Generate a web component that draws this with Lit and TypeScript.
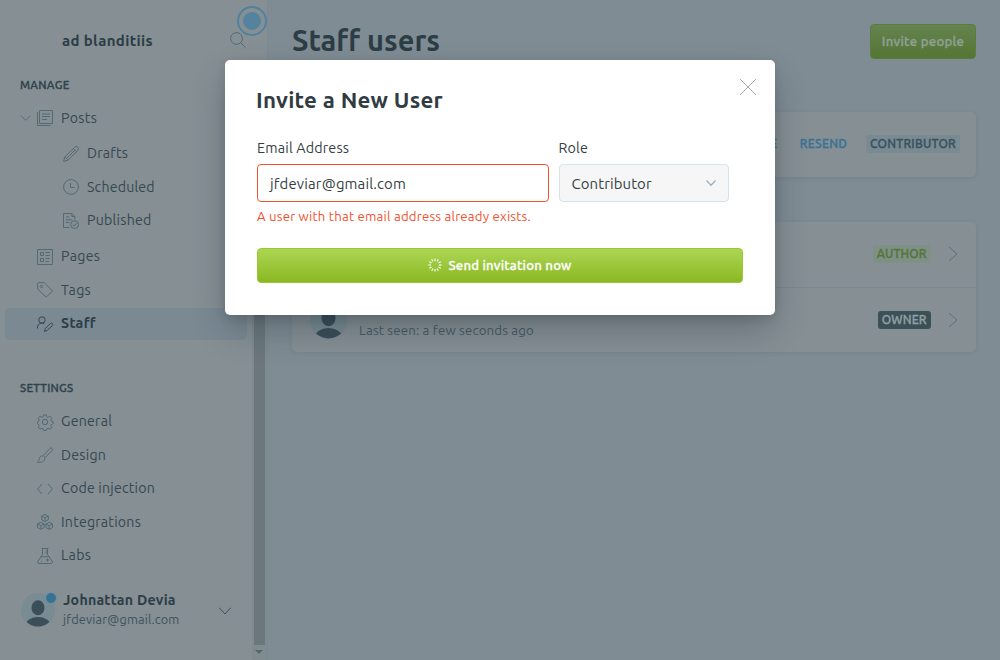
import { LitElement, html, css, svg } from "lit";
import { customElement, property } from "lit/decorators.js";

const icons: Record<string, unknown> = {
  posts: svg`<path d="M2.5.5h13v13h-13zM.5 2v13.500h13M5 4h8M5 6.500h8M5 9.500h5"/>`,
  drafts: svg`<path d="M.6 15.400l1.300-4.500L11.600 1.200a2.200 2.200 0 0 1 3.200 3.200L5.100 14.100zM1.900 10.900l3.200 3.200M10.300 2.500l3.200 3.200M3.500 12.500l8.400-8.400"/>`,
  scheduled: svg`<circle cx="8" cy="8" r="7.400"/><path d="M7.500 4v4.500h4"/>`,
  published: svg`<path d="M6.500 14.500h-6V.5h8.300l3 3v3M8.800.5v3h3M2.800 4h3.400M2.800 6.800h6M2.800 9.500h3.700"/><circle cx="11.600" cy="11.600" r="3.900"/><path d="M9.800 11.700l1.400 1.400 2.300-2.800"/>`,
  pages: svg`<path d="M.5.5h15v15H.5zM3.500 3.500h3v3h-3zM3.500 9.500h3v3h-3zM8.500 3.500h4.500M8.500 6.500h4.500M8.500 9.500h4.500M8.500 12.500h3.500"/>`,
  tags: svg`<path d="M.6 1.600a1 1 0 0 1 1-1h5.600l8.300 8.300-6.300 6.300L.6 7z"/><circle cx="4.400" cy="4.400" r="1.200"/>`,
  staff: svg`<circle cx="5" cy="4" r="3.200"/><path d="M.5 12.500V11a4.300 4.300 0 0 1 6.800-3.200M7.500 15.500l.8-3 5-5a1.400 1.400 0 0 1 2 2l-5 5z"/>`,
  general: svg`<circle cx="8" cy="8" r="2.700"/><path d="M6.700.8h2.600l.6 2 1.200.5 1.800-1 1.900 1.900-1 1.800.5 1.200 2 .6v1.900l-2 .8-.5 1.200 1 1.800-1.900 1.800-1.800-1-1.200.5-.6 1.700H6.700l-.6-1.700-1.200-.5-1.800 1-1.900-1.800 1-1.800-.5-1.200-1.300-.8V7.800l1.300-.6.5-1.200-1-1.800 1.900-1.900 1.800 1 1.200-.5z"/>`,
  design: svg`<path d="M6.300 8.700L13 1.400a1.500 1.500 0 0 1 2.200 2.100L8.100 10.500M6.200 8.500l2.100 2.100M6.200 9.200c-2-.7-3.500.3-3.800 2.200-.2 1.600-.7 2.800-1.900 3.700 2.800.7 7.600.3 7.200-4.200"/>`,
  code: svg`<path d="M5 3L.6 8 5 13M11 3l4.400 5-4.400 5"/>`,
  integrations: svg`<path d="M8 .5l3.300 1.600v3.700L8 7.500 4.700 5.800V2.100zM4.700 2.100L8 3.900l3.300-1.800M8 3.900v3.600M3.800 8.300l3.300 1.600v3.700l-3.300 1.700-3.300-1.700V9.900zM.5 9.900l3.300 1.800 3.300-1.800M3.800 11.700v3.600M12.200 8.300l3.300 1.600v3.700l-3.300 1.700-3.300-1.700V9.900zM8.900 9.900l3.300 1.800 3.300-1.800M12.200 11.700v3.600"/>`,
  labs: svg`<path d="M4.500.5h7M5.500.5v6L.7 13.600a1.300 1.300 0 0 0 1.100 1.900h12.400a1.300 1.300 0 0 0 1.100-1.900L10.500 6.500v-6M3.700 8.700h8.600M8.500 3h2M8.500 5h2M10.500 10.500v3M9 12h3M5 11.500v.8M4 13.500h.8"/>`,
  search: svg`<circle cx="6.500" cy="6.500" r="5.900"/><path d="M10.800 10.800l4.800 4.800"/>`,
};
const icon = (n: string) => html`<svg class="icon" viewBox="0 0 16 16">${icons[n]}</svg>`;

/* A line of text tracked so that it fills a given measure. */
@customElement("tracked-text")
class TrackedText extends LitElement {
  @property({ type: Number }) measure = 0;
  static styles = css`
    :host { display: inline-block; white-space: nowrap; }
    .t { display: inline-block; }
  `;
  render() { return html`<span class="t"><slot></slot></span>`; }
  firstUpdated() {
    const n = (this.textContent ?? "").trim().length;
    const el = this.renderRoot.querySelector(".t") as HTMLElement;
    const w = el.getBoundingClientRect().width;
    if (n > 1 && w > 0) el.style.letterSpacing = `${(this.measure - w) / n}px`;
  }
}
const t = (s: string, w: number) => html`<tracked-text measure=${w}>${s}</tracked-text>`;

const manage: [string, string, number, string][] = [
  ["posts", "Posts", 36.2, "first"],
  ["drafts", "Drafts", 41.2, "sub"],
  ["scheduled", "Scheduled", 67.8, "sub"],
  ["published", "Published", 64.6, "sub last"],
  ["pages", "Pages", 39.2, ""],
  ["tags", "Tags", 30, ""],
  ["staff", "Staff", 35, "active"],
];
const settings: [string, string, number, string][] = [
  ["general", "General", 51.2, ""],
  ["design", "Design", 45.2, ""],
  ["code", "Code injection", 94, ""],
  ["integrations", "Integrations", 80, ""],
  ["labs", "Labs", 30.2, ""],
];

@customElement("app-root")
export class AppRoot extends LitElement {
  static styles = css`
    :host { display: block; position: relative; width: 1000px; height: 660px; overflow: hidden;
      font-family: Ubuntu, "Noto Sans", sans-serif; font-size: 14.2px; line-height: 20px; color: #36474f; }
    * { box-sizing: border-box; }
    .page { display: flex; height: 660px; background: #7f8c94; }
    .side { width: 268px; display: flex; flex-direction: column; background: #858f94; border-right: 1px solid #7b8990; }
    .head { height: 62px; flex: none; display: flex; align-items: center; justify-content: space-between; padding: 19px 21px 0 62px; font-size: 15px; font-weight: 700; color: #2c3d45; }
    .head .icon { margin-top: -2px; }
    .scroller { flex: 1; display: flex; min-height: 0; }
    .nav { width: 252px; display: flex; flex-direction: column; }
    .bar { flex: 1; background: #808b90; display: flex; flex-direction: column; align-items: center; padding: 100px 1px 6px 0; }
    .thumb { flex: 1; width: 11px; background: #6b777d; }
    .down { margin-top: 5px; border: 4px solid transparent; border-top: 4px solid #56646b; border-bottom: 0; }
    .label { font-size: 11.4px; font-weight: 500; color: #2f424b; padding-left: 20px; height: 20px; line-height: 20px; }
    .label, .invite, .one, .tag, .send { -webkit-text-stroke: .3px currentColor; }
    .label.m { margin: 13px 0 6px; }
    .label.s { margin: 38px 0 6.3px; }
    .icon { width: 16px; height: 16px; fill: none; stroke: #536a75; stroke-width: 1; overflow: visible; flex: none; display: block; }
    .item { height: 33.5px; display: flex; align-items: center; gap: 8px; padding-left: 37px; color: #374850; }
    .item .icon { margin-top: 1px; }
    .item.first { margin-bottom: 2px; padding-left: 20px; gap: 6px; }
    .item.first .icon + * { margin-left: 2px; }
    .item.first .chev { width: 11px; height: 6px; }
    .item.sub { padding-left: 63px; }
    .item.last { margin-bottom: 2.3px; }
    .item.active { margin: 1.7px 5px 0; height: 32px; padding: 0 0 1px 32px; border-radius: 5px; background: #7a8992; font-weight: 700; color: #2d3e47; }
    .item.active .icon { stroke: #344851; }
    .chev { fill: none; stroke: #5b717b; stroke-width: 1; flex: none; display: block; overflow: visible; }
    .user { margin-top: 19.2px; display: flex; align-items: center; padding: 0 21px 0 21px; height: 38px; }
    .user > .chev { margin-top: 2px; stroke: #3d525d; }
    .who { flex: 1; margin-left: 8px; font-size: 14.2px; line-height: 19px; font-weight: 700; color: #2c3d46; display: flex; flex-direction: column; }
    .mail { font-size: 12.7px; font-weight: 400; color: #3d525d; }
    .av { position: relative; width: 34px; height: 34px; flex: none; }
    .av svg { display: block; }
    .dot { position: absolute; left: 24px; top: -1px; width: 12px; height: 12px; border-radius: 50%; background: #357294; border: 1px solid #7d9099; }
    .beacon { position: absolute; left: 237px; top: 6px; width: 30px; height: 30px; border-radius: 50%; border: 2px solid #4f829f; display: grid; place-items: center; }
    .core { width: 18px; height: 18px; border-radius: 50%; background: #5483a0; }
    .main { flex: 1; padding: 24px 24px 0; }
    .title { display: flex; justify-content: space-between; align-items: flex-start; height: 88px; font-size: 29px; line-height: 32px; font-weight: 700; color: #2c3d45; }
    .invite { width: 106px; height: 35px; border-radius: 4px; background: linear-gradient(#64834f, #547634); border: 1px solid #5b7c3b; font-size: 13.2px; line-height: 33px; font-weight: 500; color: #91a097; text-align: center; }
    .card { background: #858f94; border-radius: 5px; box-shadow: 0 1px 4px rgba(40, 60, 70, .1); }
    .one { height: 65px; margin-bottom: 45px; display: flex; justify-content: flex-end; align-items: center; padding: 0 16px 2px 0; font-size: 12.1px; font-weight: 500; }
    .link { color: #387294; margin-right: 18.7px; }
    .link.first { margin-right: 22.5px; }
    .tag { height: 18px; line-height: 18px; border-radius: 3px; font-size: 12.1px; font-weight: 500; padding: 0 4px; background: #798a92; color: #38515f; }
    .tag.author { background: #7f9086; color: #557538; }
    .tag.owner { background: #3c5058; color: #91a0a5; }
    .row { height: 65px; display: flex; align-items: center; padding: 0 18px; border-top: 1px solid #7b888f; }
    .row.top { border-top: 0; padding-bottom: 1px; }
    .row .tag { margin-right: 17.3px; }
    .row .av { width: 37px; height: 37px; }
    .grow { flex: 1; }
    .seen { margin: 20px 0 0 12px; flex: 1; font-size: 13.2px; color: #455a65; }
    .modal { position: absolute; left: 225px; top: 60px; width: 550px; height: 255px; border-radius: 5px; background: #fff; padding: 26px 32px 32px; box-shadow: 0 16px 36px -4px rgba(15, 25, 35, .3), 0 3px 10px rgba(20, 35, 45, .14); color: #343f44; }
    .top { display: flex; justify-content: space-between; }
    .heading { font-size: 22.3px; line-height: 28px; font-weight: 700; color: #303c42; margin-left: -1px; }
    .close { width: 16px; height: 16px; margin: -7px -13px 0 0; }
    .close svg { display: block; }
    .fields { display: grid; grid-template-columns: 292px 170px; column-gap: 10px; margin-top: 24px; }
    .lab { height: 26px; line-height: 20px; font-size: 14.3px; }
    .lab.role { margin-left: -.5px; }
    .input { height: 38px; border: 1px solid #f05230; border-radius: 4px; padding: 0 12px; line-height: 37px; font-size: 14.9px; background: #fff; }
    .select { border-color: #d5e3ec; background: #f6f6f6; display: flex; justify-content: space-between; align-items: center; padding-left: 11.5px; }
    .select .chev { stroke: #9fb0bb; }
    .err { margin-top: 4px; height: 20px; font-size: 13.2px; color: #f05230; }
    .send { margin-top: 22px; height: 35px; border-radius: 4px; border: 1px solid #9bc832; background: linear-gradient(#acd653, #8ab823); color: #fff; display: flex; align-items: center; justify-content: center; gap: 6px; padding-bottom: 1px; font-size: 13.2px; font-weight: 500; }
  `;

  item([i, label, w, cls]: [string, string, number, string]) {
    return html`<div class="item ${cls}">
      ${cls === "first" ? html`<svg class="chev" viewBox="0 0 11 6"><path d="M1 .8l4.500 4.500L10 .8"/></svg>` : ""}
      ${icon(i)}${t(label, w)}</div>`;
  }

  avatar(size: number, dot = false) {
    return html`<div class="av">
      <svg width=${size} height=${size} viewBox="0 0 34 34">
        <defs><clipPath id="c"><circle cx="17" cy="17" r="16.500"/></clipPath></defs>
        <circle cx="17" cy="17" r="17" fill="#798b93"/>
        <g clip-path="url(#c)" fill="#3a4f58"><ellipse cx="17" cy="14.700" rx="6.500" ry="7.500"/><ellipse cx="17" cy="32.500" rx="12.500" ry="8.500"/></g>
      </svg>${dot ? html`<span class="dot"></span>` : ""}</div>`;
  }

  render() {
    const arrow = html`<svg class="chev" width="10" height="16" viewBox="0 0 10 16"><path d="M1 1l8 7-8 7"/></svg>`;
    return html`
      <div class="page">
        <div class="side">
          <div class="head">${t("ad blanditiis", 91)}${icon("search")}</div>
          <div class="scroller">
            <div class="nav">
              <div class="label m">${t("MANAGE", 49.5)}</div>
              ${manage.map((m) => this.item(m))}
              <div class="label s">${t("SETTINGS", 53.5)}</div>
              ${settings.map((m) => this.item(m))}
              <div class="user">${this.avatar(34, true)}
                <div class="who">${t("Johnattan Devia", 112.8)}<span class="mail">${t("jfdeviar@gmail.com", 116.5)}</span></div>
                <svg class="chev" width="12" height="8" viewBox="0 0 12 8"><path d="M.3.8L6 7l5.700-6.200"/></svg>
              </div>
            </div>
            <div class="bar"><div class="thumb"></div><div class="down"></div></div>
          </div>
        </div>
        <div class="main">
          <div class="title">${t("Staff users", 148)}<div class="invite">${t("Invite people", 82.5)}</div></div>
          <div class="card one"><span class="link first">${t("REVOKE", 49)}</span><span class="link">${t("RESEND", 47.5)}</span><span class="tag">${t("CONTRIBUTOR", 86)}</span></div>
          <div class="card">
            <div class="row top"><span class="grow"></span><span class="tag author">${t("AUTHOR", 50)}</span>${arrow}</div>
            <div class="row">${this.avatar(37)}<span class="seen">${t("Last seen: a few seconds ago", 175)}</span><span class="tag owner">${t("OWNER", 45)}</span>${arrow}</div>
          </div>
        </div>
      </div>
      <div class="beacon"><span class="core"></span></div>
      <div class="modal">
        <div class="top"><div class="heading">${t("Invite a New User", 187)}</div>
          <div class="close"><svg width="16" height="16" viewBox="0 0 16 16" stroke="#8d9499" stroke-width=".8" fill="none"><path d="M0 0l16 16M16 0L0 16"/></svg></div></div>
        <div class="fields">
          <div><div class="lab">${t("Email Address", 92.2)}</div><div class="input">${t("jfdeviar@gmail.com", 136)}</div></div>
          <div><div class="lab role">${t("Role", 29.5)}</div><div class="input select">${t("Contributor", 80.2)}<svg class="chev" width="10" height="6" viewBox="0 0 10 6"><path d="M.5.5L5 5.300 9.500.5" stroke-width="1.300"/></svg></div></div>
        </div>
        <div class="err">${t("A user with that email address already exists.", 274)}</div>
        <div class="send"><svg width="14" height="14" viewBox="-7 -7 14 14" stroke="#fff" stroke-width="1.100">
          ${Array.from({ length: 12 }, (_, i) => svg`<path d="M0-4V-6.600" transform="rotate(${i * 30})"/>`)}</svg>${t("Send invitation now", 123.2)}</div>
      </div>`;
  }
}
